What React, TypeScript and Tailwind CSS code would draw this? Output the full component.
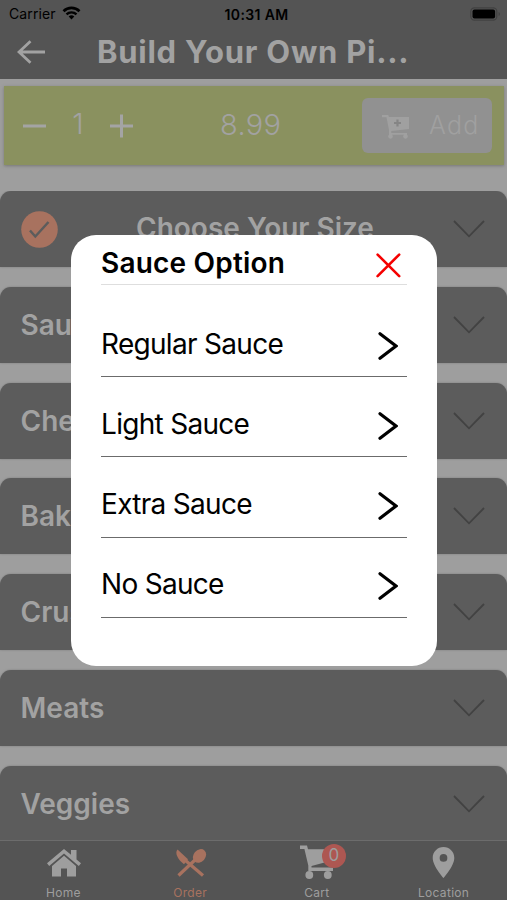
import type { ReactNode } from "react";
import { MdLocationOn } from "react-icons/md";

const sections = [
  { title: "Choose Your Size", done: true },
  { title: "Sauce", done: false },
  { title: "Cheese", done: false },
  { title: "Bake", done: false },
  { title: "Crust", done: false },
  { title: "Meats", done: false },
  { title: "Veggies", done: false },
];

const sauces = ["Regular Sauce", "Light Sauce", "Extra Sauce", "No Sauce"];

function StatusBar() {
  return (
    <div className="flex h-7 items-center justify-between pl-[9px] pr-[6px] text-sm text-black">
      <div className="flex w-24 items-center gap-[6px] tracking-[0.1px]">
        Carrier
        <svg width="19" height="14" viewBox="0 0 18 14" className="-mt-0.5 shrink-0">
          <path d="M1 5.2a11.5 11.5 0 0 1 16 0" fill="none" stroke="#000" strokeWidth="2.7" />
          <path d="M4 8.4a7.2 7.2 0 0 1 10 0" fill="none" stroke="#000" strokeWidth="2.4" />
          <path d="M6.2 10.6a4.1 4.1 0 0 1 5.6 0L9 13.6z" fill="#000" />
        </svg>
      </div>
      <span className="pt-px text-[14px] font-semibold tracking-[0.35px]">10:31 AM</span>
      <div className="flex w-[93px] justify-end">
        <svg width="31" height="14" viewBox="0 0 31 14">
          <rect x="0.8" y="0.8" width="26" height="12.4" rx="3.6" fill="none" stroke="#414141" strokeWidth="1.2" />
          <rect x="2.5" y="2.5" width="22.6" height="9" rx="2" fill="#000" />
          <path d="M28.6 5v4c1.8-.6 1.8-3.4 0-4z" fill="#414141" />
        </svg>
      </div>
    </div>
  );
}

function Section({ title, done }: { title: string; done: boolean }) {
  return (
    <div className="flex h-[76px] shrink-0 items-center rounded-t-[11px] bg-[#5c5c5c] pl-[20.5px] pr-[22.5px] shadow-[0_0_2px_#777]">
      {done && (
        <svg width="37" height="37" viewBox="0 0 37 37" className="shrink-0">
          <circle cx="18.5" cy="18.5" r="18.3" fill="#a8725f" />
          <path d="M9 19.5l5.3 6L27.5 11" fill="none" stroke="#5c5c5c" strokeWidth="2.5" />
        </svg>
      )}
      <span className={`flex-1 whitespace-nowrap text-[28px] font-semibold ${done ? "pb-[2px] text-center" : ""}`}>
        {title}
      </span>
      <svg width="32" height="18" viewBox="0 0 32 18" className="shrink-0">
        <path d="M1 1l15 15.3L31 1" fill="none" stroke="#424242" strokeWidth="1.8" />
      </svg>
    </div>
  );
}

function Tab({ label, active, children }: { label: string; active?: boolean; children: ReactNode }) {
  return (
    <div className={`flex flex-1 flex-col items-center ${active ? "text-[#a8725f]" : "text-[#9e9e9e]"}`}>
      <div className="flex h-[45px] items-center justify-center">{children}</div>
      <span className="text-[12px] leading-[14px] tracking-[0.3px]">{label}</span>
    </div>
  );
}

export default function App() {
  return (
    <div className="relative flex h-[900px] w-[507px] flex-col overflow-hidden bg-[#9e9e9e] font-['Inter',sans-serif] text-[#a2a2a2]">
      <header className="h-[79px] shrink-0 bg-[#545454]">
        <StatusBar />
        <div className="flex h-[48px] items-center pl-[17px]">
          <svg width="29" height="24" viewBox="0 0 29 24">
            <path d="M13.5 1.3L2 12l11.5 10.7M2 12h26" fill="none" stroke="#a2a2a2" strokeWidth="2.8" />
          </svg>
          <h1 className="ml-[51px] whitespace-nowrap pt-px text-[31px] font-bold tracking-[0.75px]">Build Your Own Pi...</h1>
        </div>
      </header>

      <div className="ml-[4px] mr-[3px] mt-[7px] flex h-[79px] shrink-0 items-center bg-[#8a915f] pl-[19px] pr-[12px] shadow-[0_1px_3px_#777]">
        <svg width="23" height="24" viewBox="0 0 23 24">
          <path d="M0 12h23" stroke="#a4a4a4" strokeWidth="3" />
        </svg>
        <span className="w-[64px] pb-1 text-center text-[29px] font-light">1</span>
        <svg width="23" height="24" viewBox="0 0 23 24">
          <path d="M0 12h23M11.5 .5v23" stroke="#a4a4a4" strokeWidth="3" />
        </svg>
        <span className="ml-[87px] pb-[2px] text-[29px] font-light tracking-[0.3px]">8.99</span>
        <button className="ml-auto flex h-[55px] w-[130px] items-center rounded-md bg-[#919191] pl-[20px] text-[#a0a0a0]">
          <svg width="28" height="24" viewBox="0 0 28 24" fill="currentColor" className="mt-0.5">
            <path d="M0 0h6.3l.6 2H27v12L9.3 16v2H25v1.8a2.2 2.2 0 1 1-3 0H10a2.2 2.2 0 1 1-3 0V15L4.5 2.2H0z" />
            <path d="M15.5 4.5v7M12 8h7" stroke="#858585" strokeWidth="2.2" />
          </svg>
          <span className="ml-[19px] text-[25px] font-light tracking-[1.2px]">Add</span>
        </button>
      </div>

      <main className="mt-[26.4px] flex min-h-0 flex-1 flex-col gap-[19.7px] overflow-hidden">
        {sections.map((s) => (
          <Section key={s.title} title={s.title} done={s.done} />
        ))}
      </main>

      <nav className="flex h-[60px] shrink-0 border-t border-[#6c6c6c] bg-[#545454]">
        <Tab label="Home">
          <svg width="34" height="28" viewBox="0 0 34 28" fill="currentColor" className="-mt-0.5 ml-px">
            <path d="M17 0L0 14.3l2.2 2.6L17 4.4l14.8 12.5 2.2-2.6-4.5-3.8V1H24v4.8z" />
            <path d="M17 6.8L5 17v10.5h9v-8h6v8h9V17z" />
          </svg>
        </Tab>
        <Tab label="Order" active>
          <svg width="32" height="28" viewBox="0 0 32 28" fill="currentColor" className="-mt-0.5 ml-0.5">
            <path d="M2.5 .5l10.5 9.7-4 5C4 11.5-1 4.5 2.5 .5z" />
            <ellipse cx="24.5" cy="6.9" rx="6" ry="7.4" transform="rotate(42 24.5 6.9)" />
            <path d="M3.5 26.5L20.5 10.5M10.5 11.5l17.5 15" stroke="currentColor" strokeWidth="3.2" fill="none" />
          </svg>
        </Tab>
        <Tab label="Cart">
          <div className="relative -mt-1">
            <svg width="34" height="34" viewBox="0 0 34 34" fill="currentColor">
              <path d="M0 .5h7l1 3.7h25v11L11.5 21v1.5H33V26H8.3v-5.5L4.4 4H0z" />
              <circle cx="9.3" cy="30" r="3.9" />
              <circle cx="27.8" cy="30" r="3.9" />
            </svg>
            <span className="absolute -top-px left-[22px] flex h-6 w-6 items-center justify-center rounded-full bg-[#ad5752] text-[17px]">0</span>
          </div>
        </Tab>
        <Tab label="Location">
          <MdLocationOn size={37} className="-mt-0.5" />
        </Tab>
      </nav>

      {/* Option picker */}
      <div className="absolute left-[71px] top-[235px] h-[431px] w-[366px] rounded-[25px] bg-white px-[30px] text-black">
        <div className="flex h-[50px] items-center justify-between border-b border-[#dedede] pr-[6px]">
          <h2 className="pt-[7px] text-[28px] font-semibold tracking-[0.2px]">Sauce Option</h2>
          <svg width="25" height="25" viewBox="0 0 25 25" className="mt-3">
            <path d="M1.6 1.6l21.6 21.6M23.2 1.6L1.6 23.2" stroke="#f50000" strokeWidth="2.6" strokeLinecap="round" />
          </svg>
        </div>
        <ul className="pt-[12px]">
          {sauces.map((sauce) => (
            <li key={sauce} className="flex h-[80.2px] items-center justify-between border-b-[1.5px] border-[#6b6b6b] pr-[9px] pt-[18px]">
              <span className="pb-[4px] text-[28px] tracking-[-0.7px]">{sauce}</span>
              <svg width="20" height="28" viewBox="0 0 20 28">
                <path d="M2 1.8L18 14 2 26.2" fill="none" stroke="#000" strokeWidth="3.2" strokeLinecap="round" />
              </svg>
            </li>
          ))}
        </ul>
      </div>
    </div>
  );
}
